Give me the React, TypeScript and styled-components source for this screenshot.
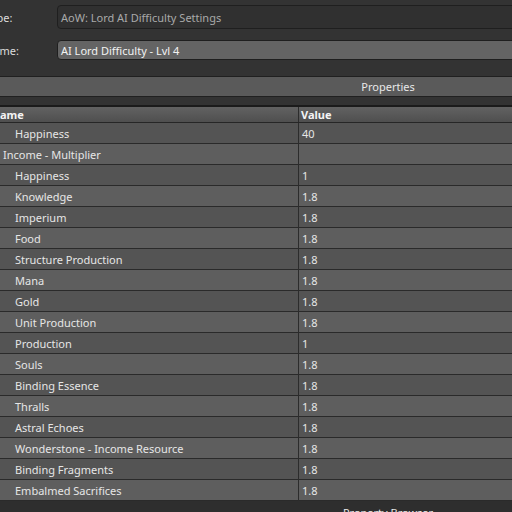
import React from 'react'
import styled, { createGlobalStyle } from 'styled-components'

const GlobalStyle = createGlobalStyle`
  html, body {
    margin: 0;
    padding: 0;
    background: #333333;
    overflow: hidden;
  }
  body {
    font-family: 'Noto Sans', 'DejaVu Sans', sans-serif;
    font-size: 11px;
    color: #e6e6e6;
  }
`

type Row = { name: string; value: string; category?: boolean }

const rows: Row[] = [
  { name: 'Happiness', value: '40' },
  { name: 'Income - Multiplier', value: '', category: true },
  { name: 'Happiness', value: '1' },
  { name: 'Knowledge', value: '1.8' },
  { name: 'Imperium', value: '1.8' },
  { name: 'Food', value: '1.8' },
  { name: 'Structure Production', value: '1.8' },
  { name: 'Mana', value: '1.8' },
  { name: 'Gold', value: '1.8' },
  { name: 'Unit Production', value: '1.8' },
  { name: 'Production', value: '1' },
  { name: 'Souls', value: '1.8' },
  { name: 'Binding Essence', value: '1.8' },
  { name: 'Thralls', value: '1.8' },
  { name: 'Astral Echoes', value: '1.8' },
  { name: 'Wonderstone - Income Resource', value: '1.8' },
  { name: 'Binding Fragments', value: '1.8' },
  { name: 'Embalmed Sacrifices', value: '1.8' }
]

const Frame = styled.div`
  margin-left: -20px;
  width: 816px;
  display: flex;
  flex-direction: column;
`

const Form = styled.div`
  display: flex;
  flex-direction: column;
  gap: 11px;
  padding: 5px 0 16px 5px;
  border-bottom: 1px solid #202020;
`

const FormRow = styled.div`
  display: grid;
  grid-template-columns: 72px 1fr;
  align-items: center;
`

const Label = styled.span`
  color: #dcdcdc;
`

const Field = styled.div<{ $editable?: boolean }>`
  box-sizing: border-box;
  height: ${p => (p.$editable ? '20px' : '24px')};
  display: flex;
  align-items: center;
  padding: 0 3px;
  border: 1px solid #1f1f1f;
  border-radius: 4px;
  background: ${p => (p.$editable ? '#646464' : '#303030')};
  color: ${p => (p.$editable ? '#f2f2f2' : '#a9a9a9')};
`

const SectionBar = styled.div`
  height: 19px;
  line-height: 19px;
  text-align: center;
  background: #5a5a5a;
  color: #e8e8e8;
  border-bottom: 1px solid #202020;
`

const Spacer = styled.div`
  height: 8px;
  background: #333333;
`

const Grid = styled.div`
  margin-left: 8px;
  border-top: 2px solid #1b1b1b;
  display: flex;
  flex-direction: column;
`

const HeaderRow = styled.div`
  display: grid;
  grid-template-columns: 310px 1fr;
  height: 15px;
  background: linear-gradient(#626262, #4f4f4f);
  border-bottom: 1px solid #262626;
`

const HeaderCell = styled.div`
  padding-left: 3px;
  line-height: 15px;
  font-weight: bold;
  color: #f4f4f4;
  & + & {
    border-left: 1px solid #2c2c2c;
    padding-left: 2px;
  }
`

const DataRow = styled.div<{ $alt: boolean }>`
  display: grid;
  grid-template-columns: 310px 1fr;
  height: 20px;
  background: ${p => (p.$alt ? '#5e5e5e' : '#545454')};
  border-bottom: 1px solid #2a2a2a;
`

const NameCell = styled.div<{ $category?: boolean }>`
  padding-left: ${p => (p.$category ? '15px' : '27px')};
  line-height: 21px;
  white-space: nowrap;
`

const ValueCell = styled.div`
  padding-left: 3px;
  line-height: 21px;
  border-left: 1px solid #2c2c2c;
`

const Footer = styled.div`
  height: 20px;
  background: #2e2e2e;
  text-align: center;
  line-height: 15px;
  padding-top: 4px;
  color: #e8e8e8;
`

export default function App() {
  return (
    <>
      <GlobalStyle />
      <Frame>
        <Form>
          <FormRow>
            <Label>Type:</Label>
            <Field>AoW: Lord AI Difficulty Settings</Field>
          </FormRow>
          <FormRow>
            <Label>Name:</Label>
            <Field $editable>AI Lord Difficulty - Lvl 4</Field>
          </FormRow>
        </Form>
        <SectionBar>Properties</SectionBar>
        <Spacer />
        <Grid>
          <HeaderRow>
            <HeaderCell>Name</HeaderCell>
            <HeaderCell>Value</HeaderCell>
          </HeaderRow>
          {rows.map((row, i) => (
            <DataRow key={i} $alt={i % 2 === 1}>
              <NameCell $category={row.category}>{row.name}</NameCell>
              <ValueCell>{row.value}</ValueCell>
            </DataRow>
          ))}
        </Grid>
        <Footer>Property Browser</Footer>
      </Frame>
    </>
  )
}
